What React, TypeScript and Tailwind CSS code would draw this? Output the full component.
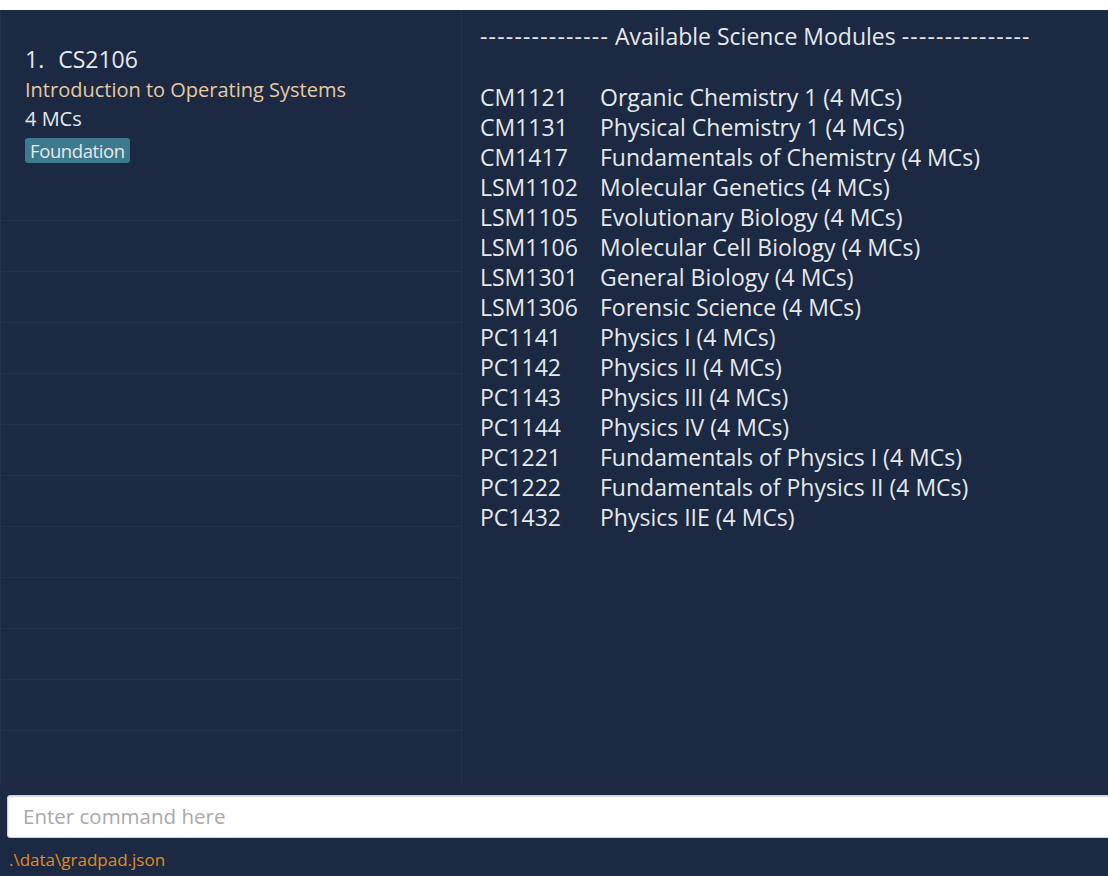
import React from "react";

const modules: [string, string][] = [
  ["CM1121", "Organic Chemistry 1 (4 MCs)"],
  ["CM1131", "Physical Chemistry 1 (4 MCs)"],
  ["CM1417", "Fundamentals of Chemistry (4 MCs)"],
  ["LSM1102", "Molecular Genetics (4 MCs)"],
  ["LSM1105", "Evolutionary Biology (4 MCs)"],
  ["LSM1106", "Molecular Cell Biology (4 MCs)"],
  ["LSM1301", "General Biology (4 MCs)"],
  ["LSM1306", "Forensic Science (4 MCs)"],
  ["PC1141", "Physics I (4 MCs)"],
  ["PC1142", "Physics II (4 MCs)"],
  ["PC1143", "Physics III (4 MCs)"],
  ["PC1144", "Physics IV (4 MCs)"],
  ["PC1221", "Fundamentals of Physics I (4 MCs)"],
  ["PC1222", "Fundamentals of Physics II (4 MCs)"],
  ["PC1432", "Physics IIE (4 MCs)"],
];

export default function App() {
  const font = { fontFamily: '"Open Sans", "Noto Sans", sans-serif' };
  return (
    <div className="w-[1108px] h-[876px] bg-white pt-[10px] overflow-hidden" style={font}>
      <div className="h-[866px] bg-[#1b2942] flex flex-col">
        <div className="flex h-[773px]">
          <div className="w-[462px] shrink-0 border-l border-r border-[#22324d] flex flex-col">
            <div className="h-[211px] border-b border-[#22324d] pl-[24px] pt-[34px]">
              <div className="text-[23px] leading-[30px] text-[#e6e8ec] flex">
                <span>1.</span>
                <span className="ml-[14px]">CS2106</span>
              </div>
              <div className="text-[20px] leading-[30px] text-[#e9c9a1] mt-[1px]">Introduction to Operating Systems</div>
              <div className="text-[20px] leading-[28px] text-[#e6e8ec]">4 MCs</div>
              <div className="mt-[5px] inline-block bg-[#3d7a8e] rounded-[3px] px-[5px] text-[18.5px] leading-[25px] text-[#e6e8ec] tracking-[-0.4px]">Foundation</div>
            </div>
            {Array.from({ length: 11 }).map((_, i) => (
              <div key={i} className="h-[51px] border-b border-[#22324d] last:border-b-0" />
            ))}
          </div>
          <div className="flex-1 pl-[18px] pt-[11px] text-[#e6e8ec] text-[23px]">
            <div className="leading-[30px] whitespace-nowrap">
              <span className="tracking-[1.2px]">---------------</span> Available Science Modules{" "}
              <span className="tracking-[1.2px]">---------------</span>
            </div>
            <div className="mt-[31px]">
              {modules.map(([code, name]) => (
                <div key={code} className="flex leading-[30px] whitespace-nowrap">
                  <span className="w-[120px] shrink-0">{code}</span>
                  <span>{name}</span>
                </div>
              ))}
            </div>
          </div>
        </div>
        <div className="mt-[12px] pl-[7px]">
          <div className="w-[1120px] h-[43px] bg-white rounded-[3px] border border-[#cfd2d6] shadow-[inset_0_1px_2px_rgba(0,0,0,0.15)] flex items-center pl-[15px] text-[20.5px] text-[#a9a9a9]">
            Enter command here
          </div>
        </div>
        <div className="pl-[9px] mt-[10px] text-[17px] leading-[24px] text-[#e18b1f]">.\data\gradpad.json</div>
      </div>
    </div>
  );
}
